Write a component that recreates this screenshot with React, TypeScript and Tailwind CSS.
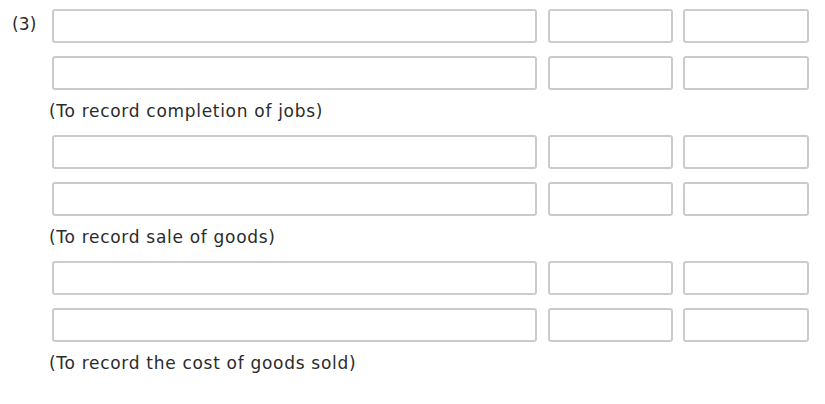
import {FC, JSX} from "react";

const Box: FC<{ className: string }> = ({ className }): JSX.Element => (
  <input
    type="text"
    className={`h-[34px] rounded-[3px] border-2 border-[#cbcbcb] bg-white outline-none ${className}`}
  />
);

const EntryRow: FC<{ label?: string }> = ({ label }): JSX.Element => (
  <div className="flex items-center">
    <div className="w-[52px] pl-3 pb-[2px] text-[17px] tracking-[0.2px]">{label}</div>
    <Box className="w-[485px]" />
    <Box className="w-[125px] ml-[11px]" />
    <Box className="w-[126px] ml-[10px]" />
  </div>
);

const groups = [
  "(To record completion of jobs)",
  "(To record sale of goods)",
  "(To record the cost of goods sold)",
];

const App: FC = (): JSX.Element => {
  return (
    <div className="w-[825px] h-[404px] bg-white pt-[9px] font-['DejaVu_Sans',Verdana,sans-serif] text-[#2b2b2b]">
      {groups.map((note, i) => (
        <div key={i} className="flex flex-col">
          <EntryRow label={i === 0 ? "(3)" : undefined} />
          <div className="mt-[13px]">
            <EntryRow />
          </div>
          <div className="pl-[49px] pt-[10px] pb-[13px] text-[17px] leading-[22px] tracking-[0.7px]">{note}</div>
        </div>
      ))}
    </div>
  );
};

export default App;
